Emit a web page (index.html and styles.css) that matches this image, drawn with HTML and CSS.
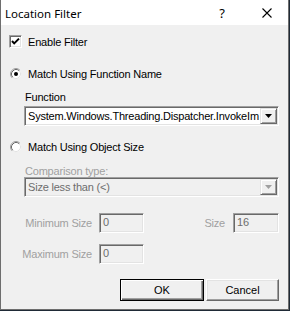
FILE: index.html
```html
<!DOCTYPE html>
<html lang="en">
<head>
    <meta charset="UTF-8">
    <title>Location Filter</title>
    <link rel="stylesheet" href="styles.css">
</head>
<body>
    <div class="window">
        <!-- title bar -->
        <div class="titlebar">
            <span class="title">Location Filter</span>
            <span class="help">?</span>
            <span class="close">
                <svg width="10" height="10" viewBox="0 0 10 10"><path d="M0.5 0.5 L9.5 9.5 M9.5 0.5 L0.5 9.5" stroke="#000" stroke-width="1.1" fill="none"/></svg>
            </span>
        </div>

        <div class="content">
            <div class="check-row">
                <span class="checkbox">
                    <svg width="9" height="9" viewBox="0 0 9 9"><path d="M1 4 L3.2 6.4 L8 1.6" stroke="#000" stroke-width="2" fill="none"/></svg>
                </span>
                <span>Enable Filter</span>
            </div>

            <div class="radio-row radio-first">
                <svg class="radio" width="12" height="12" viewBox="0 0 12 12">
                    <circle cx="6" cy="6" r="5" fill="#fff"/>
                    <path d="M2.11 9.89 A5.5 5.5 0 0 1 9.89 2.11" stroke="#a0a0a0" fill="none"/>
                    <path d="M2.82 9.18 A4.5 4.5 0 0 1 9.18 2.82" stroke="#696969" fill="none"/>
                    <path d="M9.18 2.82 A4.5 4.5 0 0 1 2.82 9.18" stroke="#e3e3e3" fill="none"/>
                    <circle cx="6" cy="6" r="2" fill="#000"/>
                </svg>
                <span>Match Using Function Name</span>
            </div>

            <div class="field-label label-function">Function</div>
            <div class="combo">
                <span class="combo-text">System.Windows.Threading.Dispatcher.InvokeIm</span>
                <span class="drop">
                    <svg width="7" height="4" viewBox="0 0 7 4"><path d="M0 0 H7 L3.5 4 Z" fill="#000"/></svg>
                </span>
            </div>

            <div class="radio-row radio-second">
                <svg class="radio" width="12" height="12" viewBox="0 0 12 12">
                    <circle cx="6" cy="6" r="5" fill="#fff"/>
                    <path d="M2.11 9.89 A5.5 5.5 0 0 1 9.89 2.11" stroke="#a0a0a0" fill="none"/>
                    <path d="M2.82 9.18 A4.5 4.5 0 0 1 9.18 2.82" stroke="#696969" fill="none"/>
                    <path d="M9.18 2.82 A4.5 4.5 0 0 1 2.82 9.18" stroke="#e3e3e3" fill="none"/>
                </svg>
                <span>Match Using Object Size</span>
            </div>

            <div class="field-label label-compare disabled-text">Comparison type:</div>
            <div class="combo combo-disabled">
                <span class="combo-text">Size less than (&lt;)</span>
                <span class="drop">
                    <svg width="7" height="4" viewBox="0 0 7 4"><path d="M0 0 H7 L3.5 4 Z" fill="#a0a0a0"/></svg>
                </span>
            </div>

            <div class="size-row size-first">
                <span class="size-label disabled-text">Minimum Size</span>
                <span class="field field-small">0</span>
                <span class="size-label2 disabled-text">Size</span>
                <span class="field field-size">16</span>
            </div>
            <div class="size-row size-second">
                <span class="size-label disabled-text">Maximum Size</span>
                <span class="field field-small">0</span>
            </div>

            <div class="buttons">
                <button class="btn btn-default">OK</button>
                <button class="btn btn-cancel">Cancel</button>
            </div>
        </div>
    </div>
</body>
</html>
```

FILE: styles.css
```css
body, html {
    margin: 0;
    padding: 0;
    background: #1f2a36;
}

.window {
    width: 289px;
    height: 310px;
    box-sizing: border-box;
    background: #f0f0f0;
    border: 1px solid #6e6e6e;
    border-top: 0;
    font-family: "Liberation Sans", Arial, sans-serif;
    font-size: 11px;
    letter-spacing: -0.2px;
    color: #000;
}

/* title bar */
.titlebar {
    height: 25px;
    background: #fff;
    display: flex;
    align-items: center;
    font-family: "Noto Sans", sans-serif;
    font-size: 11.5px;
    letter-spacing: 0;
}

.title {
    padding-left: 4px;
    margin-top: 1px;
}

.help {
    margin-left: auto;
    margin-right: 37px;
    font-size: 13px;
    margin-top: 1px;
}

.close {
    display: flex;
    margin-right: 16px;
}

/* checkbox + radios */
.check-row {
    display: flex;
    align-items: center;
    height: 13px;
    margin: 10px 0 0 8px;
    gap: 6px;
}

.checkbox {
    width: 13px;
    height: 13px;
    box-sizing: border-box;
    background: #fff;
    border: 1px solid;
    border-color: #a0a0a0 #fff #fff #a0a0a0;
    box-shadow: inset 1px 1px #696969, inset -1px -1px #e3e3e3;
    display: flex;
    align-items: center;
    justify-content: center;
}

.radio-row {
    display: flex;
    align-items: center;
    height: 12px;
    margin-left: 9px;
    gap: 6px;
}

.radio-first {
    margin-top: 20px;
}

.radio-second {
    margin-top: 15px;
}

.field-label {
    margin-left: 24px;
    line-height: 12px;
}

.label-function {
    margin-top: 11px;
}

.label-compare {
    margin-top: 12px;
}

.disabled-text {
    color: #a0a0a0;
}

/* combo boxes */
.combo {
    width: 255px;
    height: 20px;
    box-sizing: border-box;
    margin: 3px 0 0 23px;
    background: #fff;
    border: 1px solid;
    border-color: #a0a0a0 #fff #fff #a0a0a0;
    box-shadow: inset 1px 1px #696969, inset -1px -1px #e3e3e3;
    padding: 1px;
    display: flex;
    overflow: hidden;
}

.combo-text {
    flex: 1;
    overflow: hidden;
    white-space: nowrap;
    padding-left: 2px;
    line-height: 16px;
}

.drop {
    width: 17px;
    height: 16px;
    flex: none;
    box-sizing: border-box;
    background: #f0f0f0;
    border: 1px solid;
    border-color: #e3e3e3 #696969 #696969 #e3e3e3;
    box-shadow: inset 1px 1px #fff, inset -1px -1px #a0a0a0;
    display: flex;
    align-items: center;
    justify-content: center;
}

.combo-disabled {
    margin-top: 0;
    background: #f0f0f0;
    color: #6d6d6d;
}

/* size rows */
.size-row {
    display: flex;
    align-items: center;
    height: 20px;
    margin-right: 9px;
}

.size-first {
    margin-top: 16px;
}

.size-second {
    margin-top: 11px;
}

.size-label {
    width: 91px;
    text-align: right;
    margin-right: 7px;
}

.size-label2 {
    margin-left: auto;
    margin-right: 8px;
}

.field {
    height: 20px;
    box-sizing: border-box;
    border: 1px solid;
    border-color: #a0a0a0 #fff #fff #a0a0a0;
    box-shadow: inset 1px 1px #696969, inset -1px -1px #e3e3e3;
    color: #6d6d6d;
    padding-left: 3px;
    line-height: 17px;
}

.field-small {
    width: 45px;
}

.field-size {
    width: 46px;
}

/* dialog buttons */
.buttons {
    display: flex;
    justify-content: flex-end;
    gap: 2px;
    margin: 15px 9px 0 0;
}

.btn {
    height: 22px;
    box-sizing: border-box;
    margin: 0;
    padding: 0;
    font-family: "Liberation Sans", Arial, sans-serif;
    font-size: 11px;
    color: #000;
    background: #f0f0f0;
    border: 1px solid;
    border-color: #fff #696969 #696969 #fff;
    box-shadow: inset -1px -1px #a0a0a0, inset 1px 1px #e3e3e3;
}

.btn-default {
    width: 84px;
    border: 1px solid #000;
    box-shadow: inset 1px 1px #fff, inset -1px -1px #696969, inset -2px -2px #a0a0a0;
}

.btn-cancel {
    width: 73px;
}
```
